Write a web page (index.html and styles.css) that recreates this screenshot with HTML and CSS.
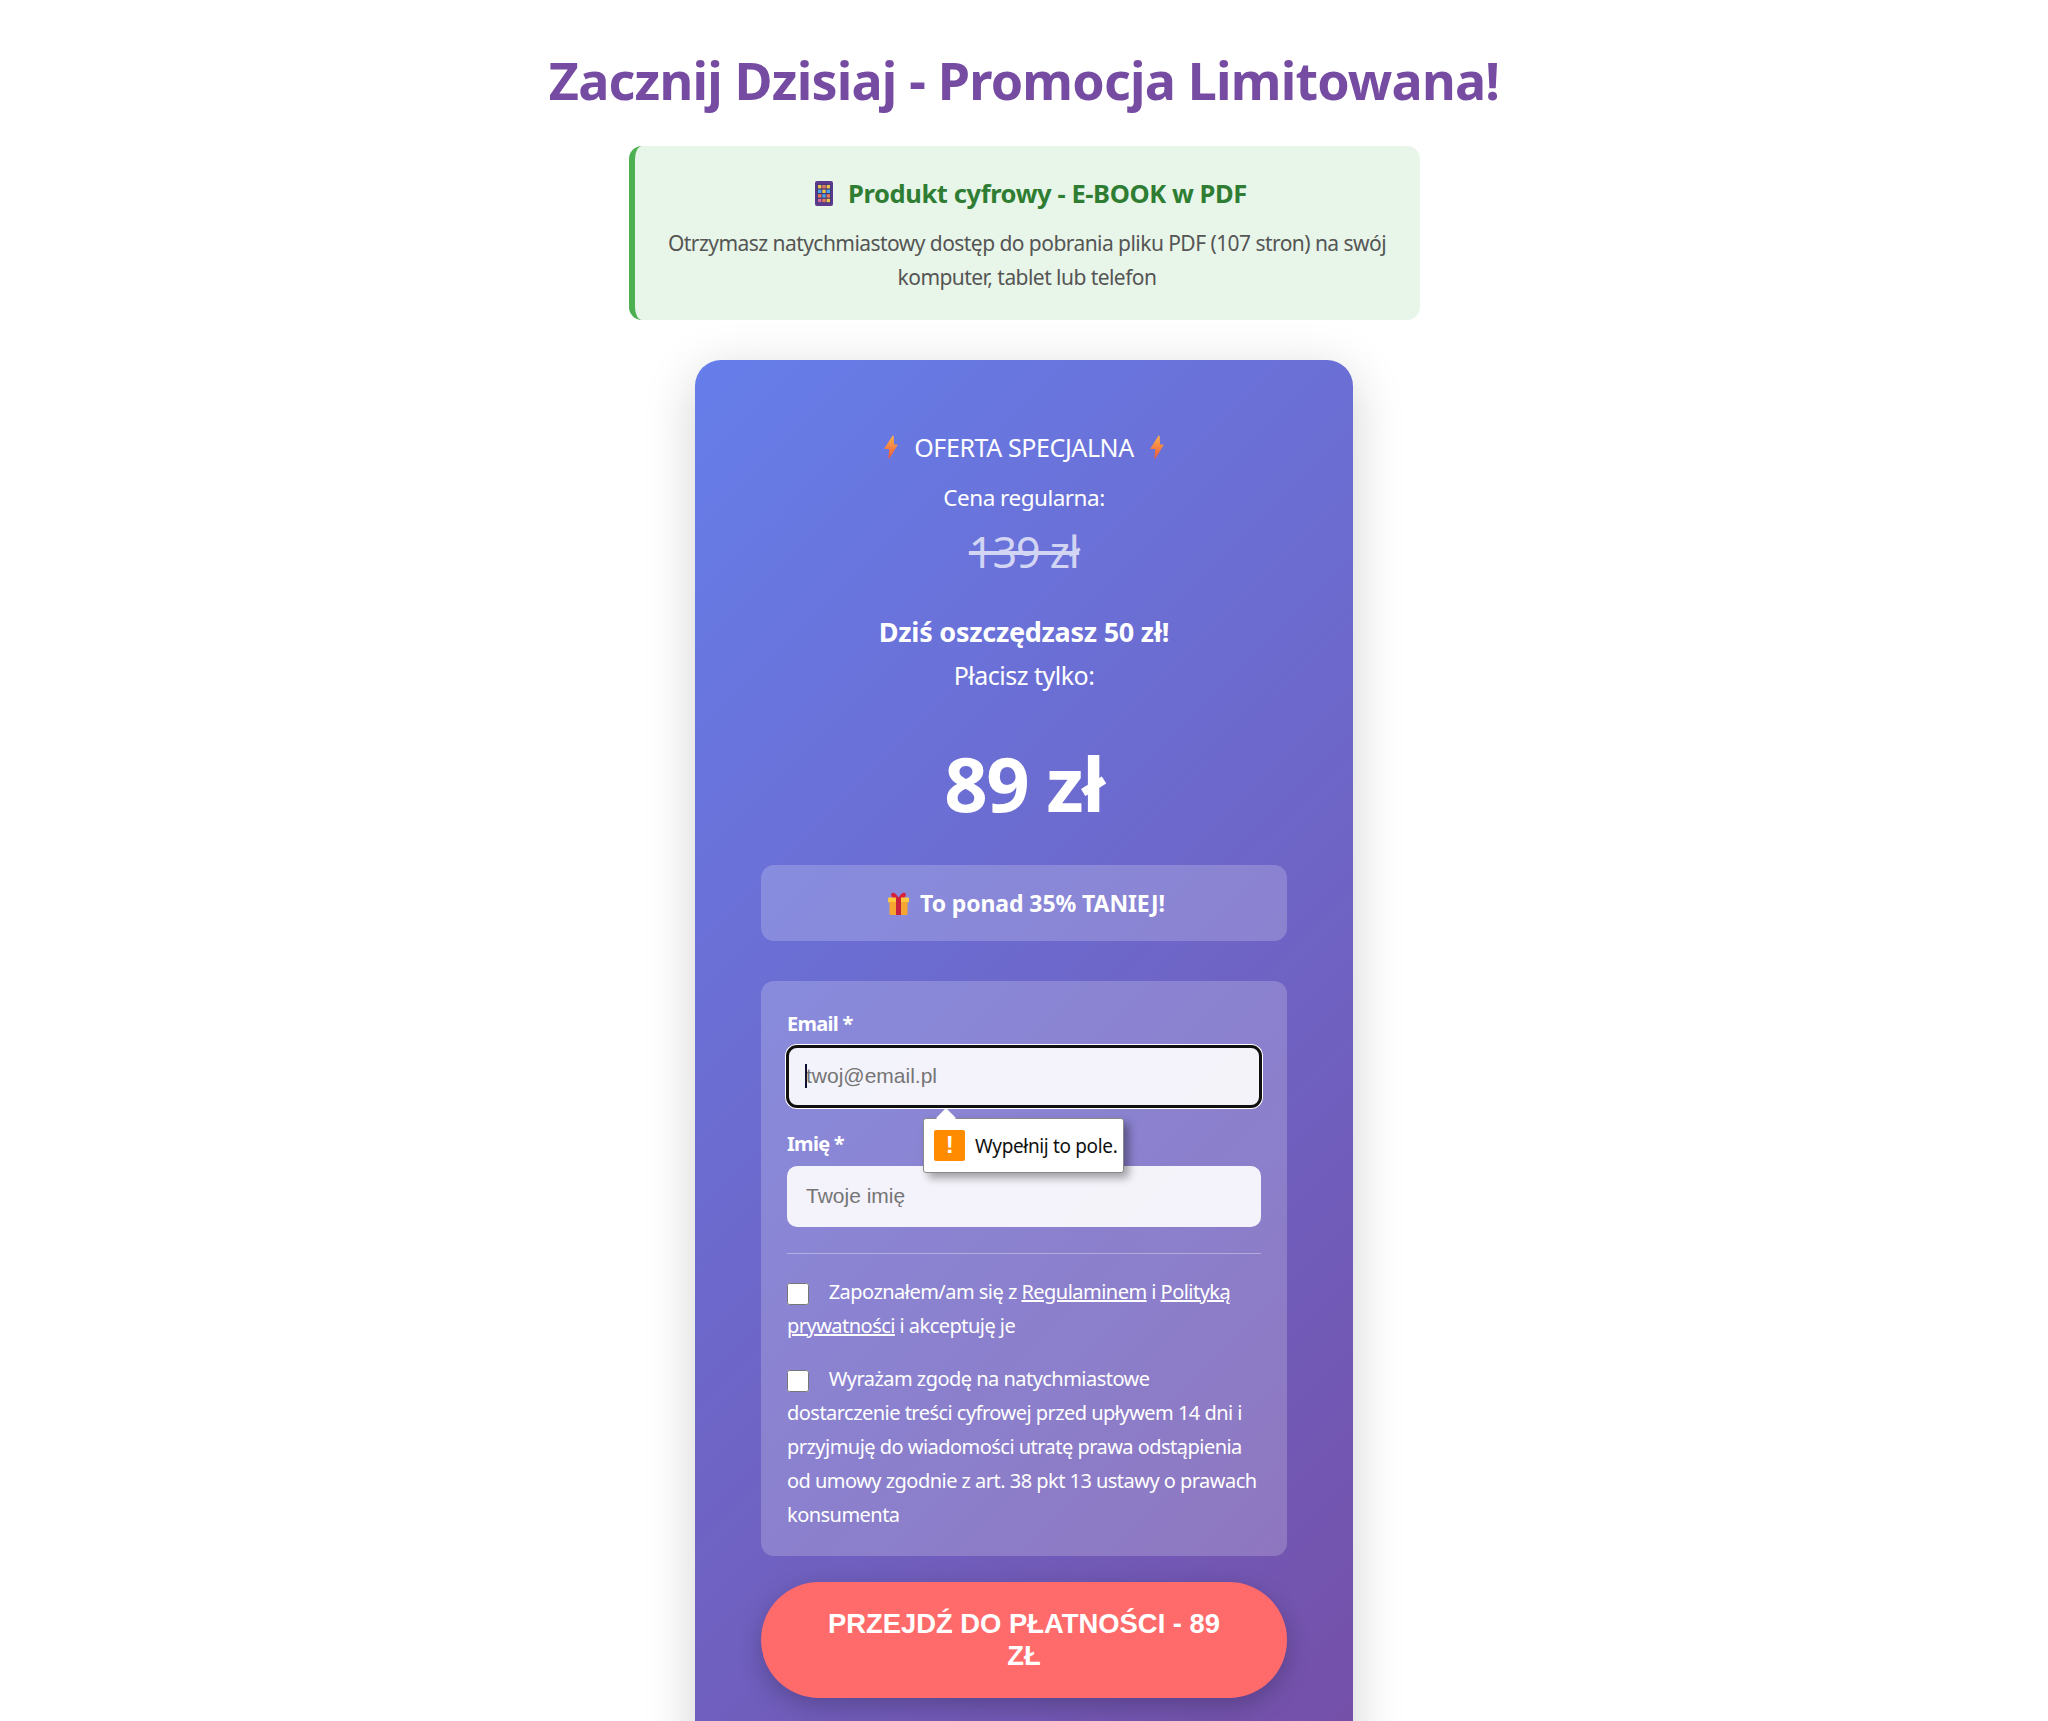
FILE: index.html
```html
<!DOCTYPE html>
<html lang="pl">
<head>
    <meta charset="UTF-8">
    <title>Zacznij Dzisiaj - Promocja Limitowana!</title>
    <link rel="stylesheet" href="styles.css">
</head>
<body>
    <main class="page">
        <h1 class="title">Zacznij Dzisiaj - Promocja Limitowana!</h1>

        <section class="info">
            <h3 class="info-head">
                <svg class="ico-tablet" viewBox="0 0 18 25"><rect width="18" height="25" rx="2" fill="#5b3a8e"/><rect x="2" y="3" width="14" height="19" fill="#3f3a78"/><g><rect x="3" y="4" width="3.4" height="3.4" fill="#f0c14b"/><rect x="7.3" y="4" width="3.4" height="3.4" fill="#e8795a"/><rect x="11.6" y="4" width="3.4" height="3.4" fill="#f0c14b"/><rect x="3" y="8.6" width="3.4" height="3.4" fill="#49a6e8"/><rect x="7.3" y="8.6" width="3.4" height="3.4" fill="#f0c14b"/><rect x="11.6" y="8.6" width="3.4" height="3.4" fill="#49a6e8"/><rect x="3" y="13.2" width="3.4" height="3.4" fill="#e8795a"/><rect x="7.3" y="13.2" width="3.4" height="3.4" fill="#49a6e8"/><rect x="11.6" y="13.2" width="3.4" height="3.4" fill="#e8795a"/><rect x="3" y="17.8" width="3.4" height="3.4" fill="#d868a0"/><rect x="7.3" y="17.8" width="3.4" height="3.4" fill="#e8795a"/><rect x="11.6" y="17.8" width="3.4" height="3.4" fill="#f0c14b"/></g></svg>
                Produkt cyfrowy - E-BOOK w PDF
            </h3>
            <p class="info-text">Otrzymasz natychmiastowy dostęp do pobrania pliku PDF (107 stron) na swój<br>komputer, tablet lub telefon</p>
        </section>

        <section class="card">
            <div class="offer">
                <svg class="ico-bolt" viewBox="0 0 14 24"><defs><linearGradient id="bolt" x1="0" y1="0" x2="0" y2="1"><stop offset="0" stop-color="#ffb04a"/><stop offset="1" stop-color="#ee5a3a"/></linearGradient></defs><path d="M9 1 1 13.500h5L5 23 13 10H9.500z" fill="url(#bolt)" stroke="url(#bolt)" stroke-width="1.200" stroke-linejoin="round"/></svg>
                <span>OFERTA SPECJALNA</span>
                <svg class="ico-bolt" viewBox="0 0 14 24"><path d="M9 1 1 13.500h5L5 23 13 10H9.500z" fill="url(#bolt)" stroke="url(#bolt)" stroke-width="1.200" stroke-linejoin="round"/></svg>
            </div>
            <p class="regular-label">Cena regularna:</p>
            <p class="old-price">139 zł</p>
            <p class="save">Dziś oszczędzasz 50 zł!</p>
            <p class="pay-label">Płacisz tylko:</p>
            <p class="price">89 zł</p>

            <div class="promo">
                <svg class="ico-gift" viewBox="0 0 21 23"><path d="M10.5 6C8 1 5.500 0 3.800 1.200 2.300 2.400 3.500 5.500 6 6zM10.500 6c2.500-5 5-6 6.700-4.800C18.700 2.400 17.500 5.500 15 6z" fill="#d8203a"/><rect y="5.500" width="21" height="5" rx="1" fill="#ffc83d"/><rect x="1.500" y="10" width="18" height="13" rx="1" fill="#f7a531"/><rect x="8" y="5" width="5" height="18" fill="#c8213f"/></svg>
                To ponad 35% TANIEJ!
            </div>

            <form class="order-form">
                <label class="field-label" for="email">Email *</label>
                <div class="field field-active">
                    <input class="field-input is-focus" id="email" type="email" placeholder="twoj@email.pl">
                    <span class="caret"></span>
                    <div class="tip">
                        <span class="tip-arrow"></span>
                        <span class="tip-icon">!</span>
                        <span>Wypełnij to pole.</span>
                    </div>
                </div>

                <label class="field-label" for="name">Imię *</label>
                <div class="field">
                    <input class="field-input" id="name" type="text" placeholder="Twoje imię">
                </div>

                <div class="consents">
                    <label class="consent">
                        <input class="check" type="checkbox">
                        Zapoznałem/am się z <a href="#">Regulaminem</a> i <a href="#">Polityką<br>prywatności</a> i akceptuję je
                    </label>
                    <label class="consent">
                        <input class="check" type="checkbox">
                        Wyrażam zgodę na natychmiastowe<br>dostarczenie treści cyfrowej przed upływem 14 dni i<br>przyjmuję do wiadomości utratę prawa odstąpienia<br>od umowy zgodnie z art. 38 pkt 13 ustawy o prawach<br>konsumenta
                    </label>
                </div>
            </form>

            <button class="pay-btn" type="button">PRZEJDŹ DO PŁATNOŚCI - 89 ZŁ</button>
        </section>
    </main>
</body>
</html>
```

FILE: styles.css
```css
html, body {
    margin: 0;
    padding: 0;
    height: 1721px;
    overflow: hidden;
    background: #fff;
}

body {
    font-family: "Noto Sans", "Open Sans", Arial, sans-serif;
    color: #333;
}

.page {
    display: flex;
    flex-direction: column;
    align-items: center;
    padding-top: 38px;
}

.title {
    margin: 0 0 24px;
    font-size: 52px;
    line-height: 84px;
    font-weight: 700;
    letter-spacing: -0.8px;
    color: #764ba2;
    white-space: nowrap;
}

.info {
    box-sizing: border-box;
    width: 791px;
    height: 174px;
    padding: 27px 20px 0;
    background: #e8f5e9;
    border-left: 6px solid #4caf50;
    border-radius: 13px;
    text-align: center;
}

.info-head {
    display: flex;
    justify-content: center;
    align-items: center;
    gap: 15px;
    margin: 0 0 14px;
    padding-left: 8px;
    font-size: 25.500px;
    line-height: 40px;
    font-weight: 700;
    letter-spacing: -0.4px;
    color: #2e7d32;
}

.ico-tablet {
    width: 18px;
    height: 25px;
}

.info-text {
    margin: 0;
    font-size: 21px;
    line-height: 33.5px;
    letter-spacing: -0.55px;
    color: #555;
    white-space: nowrap;
}

.card {
    box-sizing: border-box;
    width: 658px;
    height: 1580px;
    margin-top: 40px;
    padding: 65px 66px;
    border-radius: 26px;
    background: linear-gradient(135deg, #667eea 0%, #764ba2 100%);
    box-shadow: 0 13px 52px rgba(0, 0, 0, 0.18);
    color: #fff;
    text-align: center;
}

.offer {
    display: flex;
    justify-content: center;
    align-items: center;
    gap: 16px;
    font-size: 25px;
    line-height: 44px;
    letter-spacing: -0.4px;
}

.ico-bolt {
    width: 14px;
    height: 24px;
}

.card p {
    margin: 0;
}

.regular-label {
    margin-top: 10px !important;
    font-size: 22.500px;
    line-height: 37px;
    letter-spacing: -0.5px;
}

.old-price {
    margin-top: 3px !important;
    font-size: 43px;
    line-height: 66px;
    letter-spacing: -1px;
    opacity: 0.7;
    text-decoration: line-through;
}

.save {
    margin-top: 25px !important;
    font-size: 27px;
    line-height: 44px;
    font-weight: 700;
    letter-spacing: -0.25px;
}

.pay-label {
    font-size: 25px;
    line-height: 42px;
    letter-spacing: -0.5px;
}

.price {
    margin-top: 28px !important;
    font-size: 76px;
    line-height: 118px;
    font-weight: 700;
    letter-spacing: -1.6px;
}

.promo {
    display: flex;
    justify-content: center;
    align-items: center;
    gap: 11px;
    height: 76px;
    margin-top: 23px;
    padding-left: 5px;
    background: rgba(255, 255, 255, 0.2);
    border-radius: 13px;
    font-size: 23px;
    font-weight: 700;
    letter-spacing: -0.1px;
}

.ico-gift {
    width: 21px;
    height: 23px;
}

.order-form {
    box-sizing: border-box;
    height: 575px;
    margin-top: 40px;
    padding: 26px;
    background: rgba(255, 255, 255, 0.2);
    border-radius: 13px;
    text-align: left;
}

.field-label {
    display: block;
    height: 39px;
    font-size: 20px;
    line-height: 33px;
    font-weight: 700;
    letter-spacing: -0.7px;
}

.field {
    position: relative;
    margin-bottom: 20px;
}

.field-input {
    display: block;
    box-sizing: border-box;
    width: 100%;
    height: 61px;
    padding: 0 19px 2px;
    border: 0;
    border-radius: 10px;
    background: rgba(255, 255, 255, 0.9);
    font-family: "Liberation Sans", Arial, sans-serif;
    font-size: 21px;
    color: #222;
}

.field-input::placeholder {
    color: #757575;
}

.is-focus {
    outline: 3px solid #101010;
    outline-offset: -2px;
    box-shadow: 0 0 0 2px #fff;
}

.caret {
    position: absolute;
    left: 18px;
    top: 18px;
    width: 2px;
    height: 24px;
    background: #101030;
}

.tip {
    position: absolute;
    left: 136px;
    top: 72px;
    z-index: 2;
    display: flex;
    align-items: center;
    gap: 10px;
    box-sizing: border-box;
    width: 201px;
    height: 55px;
    padding: 0 10px;
    background: #fff;
    border: 1px solid #8a8a8a;
    border-radius: 3px;
    box-shadow: 5px 5px 8px rgba(0, 0, 0, 0.35);
    font-size: 19px;
    letter-spacing: -0.35px;
    color: #111;
    white-space: nowrap;
}

.tip-arrow {
    position: absolute;
    left: 15px;
    top: -8px;
    width: 14px;
    height: 14px;
    background: #fff;
    transform: rotate(45deg);
}

.tip-icon {
    flex: none;
    position: relative;
    width: 31px;
    height: 31px;
    border-radius: 2px;
    background: #ff8c00;
    color: #fff;
    font-family: "Liberation Sans", Arial, sans-serif;
    font-size: 24px;
    font-weight: 700;
    line-height: 29px;
    text-align: center;
}

.consents {
    margin-top: 26px;
    padding-top: 21px;
    border-top: 1px solid rgba(255, 255, 255, 0.35);
}

.consent {
    display: block;
    margin-bottom: 19px;
    font-size: 20px;
    line-height: 34px;
    letter-spacing: -0.53px;
    white-space: nowrap;
}

.consent a {
    color: #fff;
}

.check {
    width: 22px;
    height: 22px;
    margin: 0 15px 0 0;
    vertical-align: -6px;
}

.pay-btn {
    display: block;
    box-sizing: border-box;
    width: 100%;
    height: 116px;
    margin-top: 26px;
    padding: 0 52px;
    border: 0;
    border-radius: 58px;
    background: #ff6b6b;
    box-shadow: 0 8px 24px rgba(0, 0, 0, 0.22);
    font-family: "Liberation Sans", Arial, sans-serif;
    font-size: 27.400px;
    line-height: 32px;
    font-weight: 700;
    color: #fff;
}
```
